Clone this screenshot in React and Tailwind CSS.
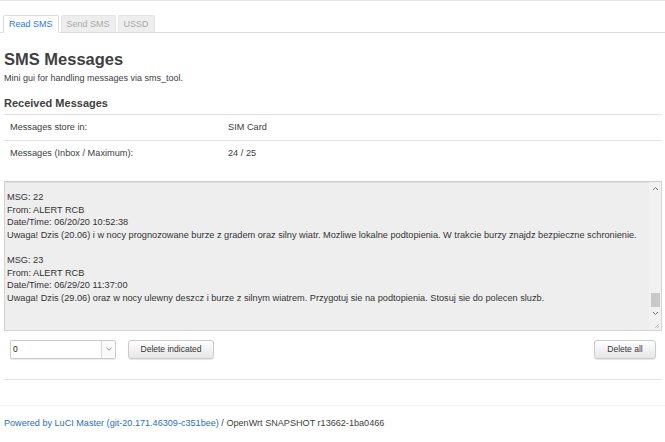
import { useState } from 'react'

const messages = [
  {
    id: 22,
    from: 'ALERT RCB',
    date: '06/20/20 10:52:38',
    text: 'Uwaga! Dzis (20.06) i w nocy prognozowane burze z gradem oraz silny wiatr. Mozliwe lokalne podtopienia. W trakcie burzy znajdz bezpieczne schronienie.'
  },
  {
    id: 23,
    from: 'ALERT RCB',
    date: '06/29/20 11:37:00',
    text: 'Uwaga! Dzis (29.06) oraz w nocy ulewny deszcz i burze z silnym wiatrem. Przygotuj sie na podtopienia. Stosuj sie do polecen sluzb.'
  }
]

const tabs = ['Read SMS', 'Send SMS', 'USSD']

const App = () => {
  const [active, setActive] = useState('Read SMS')
  const [index, setIndex] = useState('0')

  return (
    <div className="min-h-[442px] bg-white text-[#404040] font-['Liberation_Sans',Arial,sans-serif] border-t border-[#e8e8e8]">
      {/* Tabs */}
      <div className="mt-[14px] flex items-end gap-[2px] pl-[3px] border-b border-[#dddddd] h-[18px]">
        {tabs.map((t) => (
          <button
            key={t}
            onClick={() => setActive(t)}
            className={
              t === active
                ? 'h-[18px] -mb-px px-[5px] text-[9px] leading-[16px] text-[#2a7ad8] bg-white border border-[#dddddd] border-b-white rounded-t-[2px]'
                : 'h-[17px] px-[5px] text-[9px] leading-[16px] text-[#aaaaaa] bg-[#eeeeee] border border-[#e4e4e4] border-b-0 rounded-t-[2px]'
            }
          >
            {t}
          </button>
        ))}
      </div>

      <div className="px-[4px]">
        {/* Header */}
        <h1 className="mt-[16px] text-[16.5px] leading-[20px] font-bold text-[#404040]">SMS Messages</h1>
        <p className="mt-[4px] text-[9px] leading-[11px]">Mini gui for handling messages via sms_tool.</p>

        <h2 className="mt-[12px] text-[11px] leading-[14px] font-bold">Received Messages</h2>

        {/* Info table */}
        <div className="mt-[4px] border-t border-[#e2e2e2] text-[9.2px] w-[658px]">
          <div className="flex items-center h-[26px] border-b border-[#e2e2e2]">
            <span className="pl-[6px] w-[224px]">Messages store in:</span>
            <span>SIM Card</span>
          </div>
          <div className="flex items-center h-[26px]">
            <span className="pl-[6px] w-[224px]">Messages (Inbox / Maximum):</span>
            <span>24 / 25</span>
          </div>
        </div>

        {/* Message box */}
        <div className="mt-[14px] w-[658px] h-[150px] flex bg-[#eeeeee] border border-[#d4d4d4] border-t-[#cccccc] shadow-[inset_0_1px_1px_rgba(0,0,0,0.06)]">
          <div className="flex-1 pl-[2px] pt-[9px] text-[9.2px] leading-[12.6px] text-[#333333] overflow-hidden whitespace-nowrap">
            {messages.map((m) => (
              <div key={m.id} className="mb-[12.6px]">
                <div>MSG: {m.id}</div>
                <div>From: {m.from}</div>
                <div>Date/Time: {m.date}</div>
                <div>{m.text}</div>
              </div>
            ))}
          </div>
          {/* fake scrollbar */}
          <div className="w-[12px] flex flex-col items-center bg-[#f1f1f1]">
            <svg className="mt-[4px]" width="7" height="5" viewBox="0 0 7 5">
              <path d="M1 4 L3.5 1.5 L6 4" fill="none" stroke="#7a7a7a" strokeWidth="1" />
            </svg>
            <div className="flex-1" />
            <div className="w-[9px] h-[14px] bg-[#c8c8c8]" />
            <svg className="mt-[4px]" width="7" height="5" viewBox="0 0 7 5">
              <path d="M1 1 L3.5 3.5 L6 1" fill="none" stroke="#7a7a7a" strokeWidth="1" />
            </svg>
            <svg className="mt-[7px] mb-[1px] self-end mr-[1px]" width="6" height="6" viewBox="0 0 6 6">
              <path d="M5 1 L1 5 M5 3 L3 5" stroke="#b5b5b5" strokeWidth="0.8" />
            </svg>
          </div>
        </div>

        {/* Controls */}
        <div className="mt-[8px] flex items-center w-[658px] h-[20px]">
          <div className="ml-[6px] relative w-[106px] h-[19px] border border-[#cccccc] rounded-[2px] bg-white shadow-[0_1px_1px_rgba(0,0,0,0.08)] flex items-center">
            <select
              value={index}
              onChange={(e) => setIndex(e.target.value)}
              className="appearance-none w-full h-full bg-transparent pl-[2px] text-[8.5px] text-[#222222] outline-none"
            >
              <option value="0">0</option>
              <option value="1">1</option>
            </select>
            <div className="absolute right-0 top-0 h-full w-[14px] border-l border-[#d8d8d8] bg-[#fafafa] flex items-center justify-center pointer-events-none">
              <svg width="6" height="4" viewBox="0 0 6 4">
                <path d="M0.5 0.8 L3 3.2 L5.5 0.8" fill="none" stroke="#888888" strokeWidth="0.9" />
              </svg>
            </div>
          </div>
          <button className="ml-[12px] w-[86px] h-[19px] text-[8.5px] text-[#333333] border border-[#cccccc] rounded-[3px] bg-gradient-to-b from-white to-[#e6e6e6] shadow-[0_1px_1px_rgba(0,0,0,0.1)]">
            Delete indicated
          </button>
          <button className="ml-auto mr-[6px] w-[62px] h-[19px] text-[8.5px] text-[#333333] border border-[#cccccc] rounded-[3px] bg-gradient-to-b from-white to-[#e6e6e6] shadow-[0_1px_1px_rgba(0,0,0,0.1)]">
            Delete all
          </button>
        </div>

        <div className="mt-[20px] w-[658px] border-t border-[#e2e2e2]" />
      </div>

      <div className="mt-[25px] border-t border-[#f2f2f2]" />

      {/* Footer */}
      <p className="mt-[11px] px-[4px] text-[9.1px] leading-[12px]">
        <a href="#" className="text-[#2a6ebb]">Powered by LuCI Master (git-20.171.46309-c351bee)</a>
        {' / OpenWrt SNAPSHOT r13662-1ba0466'}
      </p>
    </div>
  )
}

export default App
